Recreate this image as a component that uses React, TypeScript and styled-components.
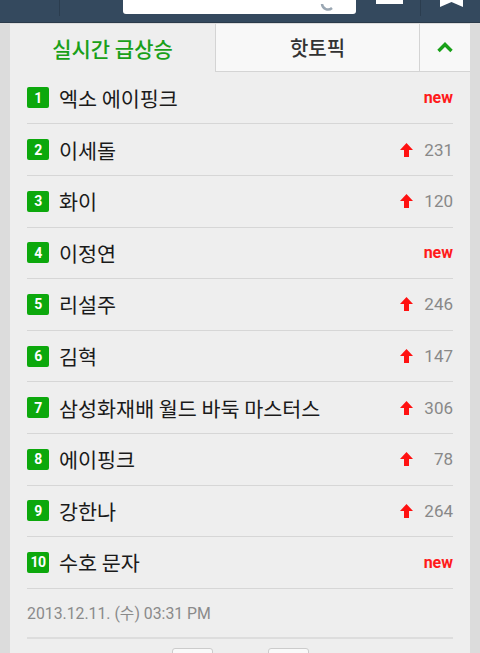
import styled, { createGlobalStyle } from 'styled-components';

const GlobalStyle = createGlobalStyle`
    html, body {
        margin: 0;
        padding: 0;
        background: #dcdcdc;
        font-family: Roboto, "Noto Sans CJK KR", sans-serif;
    }
`;

const Header = styled.div`
    height: 22px;
    background-color: #34495e;
    border-bottom: 1px solid #2a3a4a;
    display: flex;
    align-items: flex-start;
`;

const NavDivider = styled.div<{ $left: number }>`
    width: 1px;
    height: 16px;
    background: #2b3d4f;
    margin-left: ${(p) => p.$left}px;
`;

const SearchBox = styled.div`
    margin-left: 63px;
    width: 233px;
    height: 14px;
    background: #ffffff;
    border-radius: 0 0 3px 3px;
    display: flex;
    justify-content: flex-end;
    align-items: flex-end;
    padding-right: 22px;
    box-sizing: border-box;
    overflow: hidden;
`;

const MenuBar = styled.div`
    margin-left: 20px;
    width: 27px;
    height: 4px;
    background: #ffffff;
`;

const Body = styled.div`
    padding: 1px 10px 0;
`;

const Card = styled.div`
    background: #eeeeee;
    height: 640px;
`;

const Tabs = styled.div`
    display: flex;
    height: 48px;
`;

const Tab = styled.div<{ $active?: boolean; $width: number }>`
    width: ${(p) => p.$width}px;
    display: flex;
    align-items: center;
    justify-content: center;
    font-size: ${(p) => (p.$active ? '21px' : '20px')};
    font-family: "Noto Sans CJK KR", sans-serif;
    font-weight: 500;
    color: ${(p) => (p.$active ? '#19a019' : '#333333')};
    background: ${(p) => (p.$active ? '#eeeeee' : '#f8f8f8')};
    border-left: ${(p) => (p.$active ? 'none' : '1px solid #d4d4d4')};
    border-bottom: ${(p) => (p.$active ? 'none' : '1px solid #d4d4d4')};
    box-sizing: border-box;
`;

const List = styled.div`
    padding: 0 17px;
`;

const Row = styled.div`
    height: 51.6px;
    box-sizing: border-box;
    border-bottom: 1px solid #d6d6d6;
    display: flex;
    align-items: center;
    &:first-child {
        height: 52.4px;
    }
`;

const Badge = styled.div`
    width: 22px;
    height: 21px;
    border-radius: 2px;
    background: #0ca80c;
    color: #ffffff;
    font-family: Roboto, sans-serif;
    font-weight: 700;
    font-size: 14px;
    display: flex;
    align-items: center;
    justify-content: center;
    letter-spacing: -0.5px;
    flex-shrink: 0;
`;

const Keyword = styled.div`
    margin-left: 10px;
    font-size: 20.7px;
    color: #1a1a1a;
    font-family: "Noto Sans CJK KR", sans-serif;
    flex: 1;
`;

const NewMark = styled.span`
    color: #ff1a1a;
    font-weight: 700;
    font-size: 16px;
    font-family: Roboto, sans-serif;
`;

const Change = styled.div`
    display: flex;
    align-items: center;
    color: #888888;
    font-size: 17px;
    font-family: Roboto, sans-serif;
`;

const ChangeValue = styled.span`
    width: 40px;
    text-align: right;
`;

const DateLine = styled.div`
    height: 48px;
    display: flex;
    align-items: center;
    color: #8a8a8a;
    font-size: 15.8px;
    border-bottom: 2px solid #dddddd;
`;

const Pager = styled.div`
    display: flex;
    justify-content: center;
    gap: 55px;
    padding-top: 9px;
`;

const PageButton = styled.div`
    width: 39px;
    height: 20px;
    background: #f9f9f9;
    border: 1px solid #cccccc;
    border-radius: 3px;
`;

const Arrow = () => (
    <svg width="13" height="14" viewBox="0 0 13 14">
        <path d="M6.5 0 L13 7 L9 7 L9 14 L4 14 L4 7 L0 7 Z" fill="#ff1111" />
    </svg>
);

type Item = { name: string; change: number | null };

const items: Item[] = [
    { name: '엑소 에이핑크', change: null },
    { name: '이세돌', change: 231 },
    { name: '화이', change: 120 },
    { name: '이정연', change: null },
    { name: '리설주', change: 246 },
    { name: '김혁', change: 147 },
    { name: '삼성화재배 월드 바둑 마스터스', change: 306 },
    { name: '에이핑크', change: 78 },
    { name: '강한나', change: 264 },
    { name: '수호 문자', change: null },
];

export default function App() {
    return (
        <>
            <GlobalStyle />
            <Header>
                <NavDivider $left={59} />
                <SearchBox>
                    <svg width="14" height="10" viewBox="0 0 14 10">
                        <path d="M2 0 A6 6 0 0 0 12 4" stroke="#9aa7b3" strokeWidth="2.5" fill="none" />
                    </svg>
                </SearchBox>
                <MenuBar />
                <NavDivider $left={17} />
                <svg width="24" height="8" viewBox="0 0 24 8" style={{ marginLeft: 19 }}>
                    <path d="M0 0 H23 V7 L11.5 2 L0 7 Z" fill="#ffffff" />
                </svg>
            </Header>
            <Body>
                <Card>
                    <Tabs>
                        <Tab $active $width={205}>실시간 급상승</Tab>
                        <Tab $width={204}>핫토픽</Tab>
                        <Tab $width={51}>
                            <svg width="18" height="11" viewBox="0 0 18 11">
                                <path d="M2.5 9 L9 2.5 L15.5 9" stroke="#19a019" strokeWidth="3.4" fill="none" />
                            </svg>
                        </Tab>
                    </Tabs>
                    <List>
                        {items.map((item, i) => (
                            <Row key={item.name}>
                                <Badge>{i + 1}</Badge>
                                <Keyword>{item.name}</Keyword>
                                {item.change === null ? (
                                    <NewMark>new</NewMark>
                                ) : (
                                    <Change>
                                        <Arrow />
                                        <ChangeValue>{item.change}</ChangeValue>
                                    </Change>
                                )}
                            </Row>
                        ))}
                        <DateLine>2013.12.11. (수) 03:31 PM</DateLine>
                    </List>
                    <Pager>
                        <PageButton />
                        <PageButton />
                    </Pager>
                </Card>
            </Body>
        </>
    );
}
